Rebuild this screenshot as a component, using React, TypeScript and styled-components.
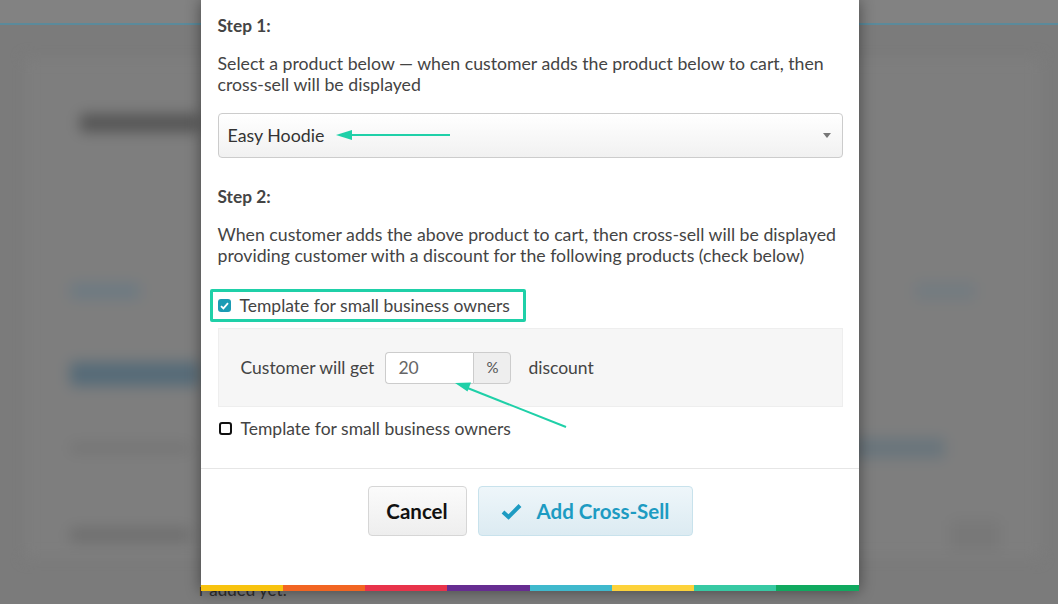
import React from "react";
import styled, { createGlobalStyle } from "styled-components";

const Global = createGlobalStyle`
  html, body { margin: 0; padding: 0; }
  body {
    width: 1058px; height: 604px; overflow: hidden;
    font-family: Lato, "Open Sans", "Liberation Sans", sans-serif;
    background: #7d7d7d;
  }
`;

const Page = styled.div`
  position: relative;
  width: 1058px;
  height: 604px;
  overflow: hidden;
  background: #7b7b7b;
`;

const BgTop = styled.div`
  height: 23px;
  background: #828282;
  border-bottom: 2px solid #5b8a9b;
`;

const BgBody = styled.div`
  display: flex;
  flex-direction: column;
  margin: 33px 18px 0 25px;
  padding: 0 40px 0 45px;
  background: #7e7e7e;
  height: 500px;
  filter: blur(7px);
`;

const BgRow = styled.div<{ mt: number }>`
  display: flex;
  justify-content: space-between;
  align-items: center;
  margin-top: ${(p) => p.mt}px;
`;

const Blob = styled.div<{ w: number; h: number; c: string; ml?: number; mr?: number }>`
  width: ${(p) => p.w}px;
  height: ${(p) => p.h}px;
  background: ${(p) => p.c};
  margin-left: ${(p) => p.ml ?? 0}px;
  margin-right: ${(p) => p.mr ?? 0}px;
  border-radius: 4px;
`;

const BgFoot = styled.div`
  margin-top: 22px;
  padding-left: 199px;
  font-size: 17px;
  line-height: 20px;
  color: #2e2e2e;
`;

const Overlay = styled.div`
  position: absolute;
  inset: 0;
  display: flex;
  justify-content: center;
  align-items: flex-start;
`;

const Modal = styled.div`
  position: relative;
  width: 658px;
  height: 591px;
  margin-left: 1px;
  background: #fff;
  box-shadow: 0 0 14px rgba(0, 0, 0, 0.45);
  display: flex;
  flex-direction: column;
  color: #444;
  font-size: 17.5px;
  line-height: 21px;
`;

const Body = styled.div`
  padding: 15px 16px 0 17px;
  display: flex;
  flex-direction: column;
`;

const StepTitle = styled.div<{ mt?: number }>`
  font-weight: 700;
  font-size: 17.3px;
  color: #444;
  margin-top: ${(p) => p.mt ?? 0}px;
`;

const Para = styled.p`
  margin: 17px 0 0;
  color: #444;
  font-size: 17.7px;
`;

const SelectBox = styled.div`
  margin-top: 18px;
  height: 43px;
  border: 1px solid #cccccc;
  border-radius: 4px;
  background: linear-gradient(#ffffff, #f1f1f1);
  display: flex;
  align-items: center;
  justify-content: space-between;
  padding: 0 11px 0 9px;
  color: #333;
  font-size: 17.8px;
`;

const Caret = styled.span`
  width: 0;
  height: 0;
  border-left: 4.5px solid transparent;
  border-right: 4.5px solid transparent;
  border-top: 5px solid #777;
`;

const Highlight = styled.label`
  align-self: flex-start;
  margin: 23px 0 0 -8px;
  border: 3px solid #1fd0a8;
  border-radius: 2px;
  height: 27px;
  padding: 0 13px 0 5px;
  display: inline-flex;
  align-items: center;
  gap: 9px;
  color: #444;
`;

const Check = styled.span<{ on?: boolean }>`
  width: 13px;
  height: 13px;
  box-sizing: border-box;
  border-radius: 3px;
  display: inline-flex;
  align-items: center;
  justify-content: center;
  background: ${(p) => (p.on ? "#1b9bb4" : "#fff")};
  border: ${(p) => (p.on ? "none" : "2px solid #111")};
`;

const Panel = styled.div`
  margin-top: 6px;
  height: 77px;
  background: #f6f6f6;
  border: 1px solid #eeeeee;
  display: flex;
  align-items: center;
  padding: 0 0 0 22px;
  color: #444;
`;

const InputGroup = styled.div`
  display: flex;
  margin: 0 17px 0 11px;
  height: 32px;
`;

const Input = styled.div`
  width: 75px;
  border: 1px solid #cccccc;
  border-right: none;
  border-radius: 4px 0 0 4px;
  background: #fff;
  display: flex;
  align-items: center;
  padding-left: 12px;
  color: #666;
`;

const Addon = styled.div`
  width: 36px;
  border: 1px solid #cccccc;
  border-radius: 0 4px 4px 0;
  background: #eeeeee;
  display: flex;
  align-items: center;
  justify-content: center;
  color: #555;
  font-size: 15px;
`;

const Row = styled.label`
  margin-top: 11px;
  display: flex;
  align-items: center;
  gap: 9px;
  color: #444;
  padding-left: 1px;
`;

const Divider = styled.div`
  margin-top: 29px;
  height: 1px;
  background: #e6e6e6;
`;

const Footer = styled.div`
  display: flex;
  justify-content: center;
  gap: 11px;
  padding-top: 17px;
  padding-left: 1px;
`;

const Btn = styled.button<{ primary?: boolean }>`
  height: 50px;
  box-sizing: border-box;
  border-radius: 4px;
  font-family: inherit;
  font-weight: 700;
  font-size: 20.5px;
  display: inline-flex;
  align-items: center;
  justify-content: center;
  gap: 15px;
  cursor: pointer;
  border: 1px solid ${(p) => (p.primary ? "#c8e2ec" : "#d6d6d6")};
  color: ${(p) => (p.primary ? "#1d9bc2" : "#111")};
  background: ${(p) =>
    p.primary ? "linear-gradient(#eef6fa, #dcebf2)" : "linear-gradient(#fbfbfb, #eeeeee)"};
  width: ${(p) => (p.primary ? "215px" : "99px")};
  padding: 0;
`;

const Stripe = styled.div`
  margin-top: auto;
  height: 6px;
  display: grid;
  grid-template-columns: repeat(8, 1fr);
`;

const Seg = styled.div<{ c: string }>`
  background: ${(p) => p.c};
`;

const Arrow = styled.svg`
  position: absolute;
  left: 0;
  top: 0;
  pointer-events: none;
  overflow: visible;
`;

const stripeColors = ["#f8c30e", "#f26522", "#e8334a", "#662d91", "#3fb9cd", "#fdd23a", "#37c9a3", "#10a95f"];

export default function App() {
  return (
    <>
      <Global />
      <Page>
        <BgTop />
        <BgBody>
          <BgRow mt={56}>
            <Blob w={120} h={18} c="#555" ml={10} />
          </BgRow>
          <BgRow mt={150}>
            <Blob w={70} h={16} c="#6d7a82" />
            <Blob w={60} h={18} c="#737b80" mr={25} />
          </BgRow>
          <BgRow mt={62}>
            <Blob w={130} h={24} c="#566b78" />
          </BgRow>
          <BgRow mt={52}>
            <Blob w={120} h={10} c="#747474" />
            <Blob w={95} h={20} c="#69757c" mr={55} />
          </BgRow>
          <BgRow mt={62}>
            <Blob w={120} h={14} c="#6e6e6e" />
            <Blob w={50} h={30} c="#787878" />
          </BgRow>
        </BgBody>
        <BgFoot>r added yet.</BgFoot>
        <Overlay>
          <Modal>
            <Body>
              <StepTitle>Step 1:</StepTitle>
              <Para>
                Select a product below — when customer adds the product below to cart, then cross-sell will be
                displayed
              </Para>
              <SelectBox>
                <span>Easy Hoodie</span>
                <Caret />
              </SelectBox>
              <StepTitle mt={28}>Step 2:</StepTitle>
              <Para>
                When customer adds the above product to cart, then cross-sell will be displayed providing customer
                with a discount for the following products (check below)
              </Para>
              <Highlight>
                <Check on>
                  <svg width="9" height="8" viewBox="0 0 9 8">
                    <path d="M1 4.2 L3.4 6.4 L8 1.2" stroke="#fff" strokeWidth="1.8" fill="none" />
                  </svg>
                </Check>
                Template for small business owners
              </Highlight>
              <Panel>
                Customer will get
                <InputGroup>
                  <Input>20</Input>
                  <Addon>%</Addon>
                </InputGroup>
                discount
              </Panel>
              <Row>
                <Check />
                Template for small business owners
              </Row>
            </Body>
            <Divider />
            <Footer>
              <Btn>Cancel</Btn>
              <Btn primary>
                <svg width="21" height="17" viewBox="0 0 21 17">
                  <path d="M2 9 L7.5 14 L19 2.5" stroke="#1d9bc2" strokeWidth="4" fill="none" />
                </svg>
                Add Cross-Sell
              </Btn>
            </Footer>
            <Stripe>
              {stripeColors.map((c) => (
                <Seg key={c} c={c} />
              ))}
            </Stripe>
            <Arrow width="658" height="591">
              <line x1="249" y1="135" x2="145" y2="135" stroke="#1fd0a8" strokeWidth="2" />
              <polygon points="135,135 151,130 151,140" fill="#1fd0a8" />
              <line x1="365" y1="427" x2="264" y2="387" stroke="#1fd0a8" strokeWidth="2" />
              <polygon points="254,383 270,382.5 266.5,391.5" fill="#1fd0a8" />
            </Arrow>
          </Modal>
        </Overlay>
      </Page>
    </>
  );
}
